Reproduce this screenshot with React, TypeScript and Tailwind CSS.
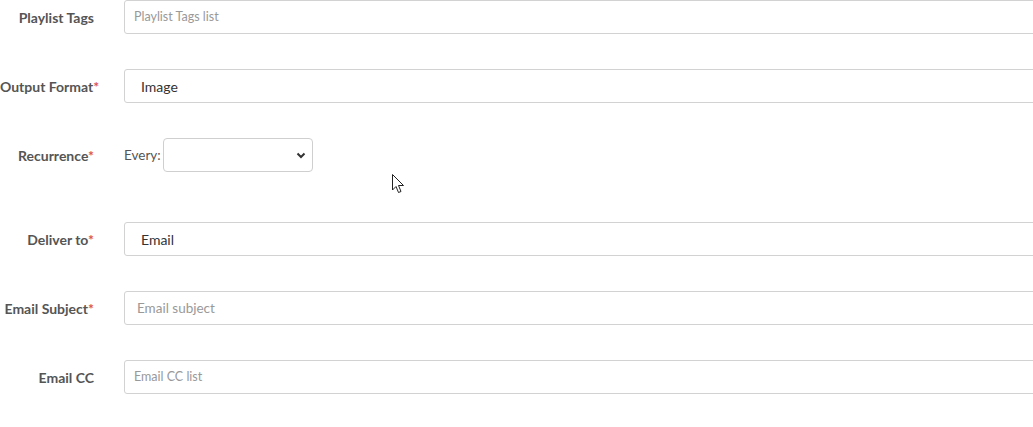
import React from 'react';

const FONT = "font-['Source_Sans_Pro','Lato','Noto_Sans',sans-serif]";

function Label({ text, required }: { text: string; required?: boolean }) {
  return (
    <div className="w-[94px] shrink-0 text-right text-[14px] font-bold text-[#555] whitespace-nowrap">
      {text}
      {required && <span className="text-[#d9534f]">*</span>}
    </div>
  );
}

function TextField({ value, placeholder, small }: { value?: string; placeholder?: string; small?: boolean }) {
  return (
    <div className="ml-[30px] -mr-4 flex h-[34px] flex-1 items-center rounded-[3px] border border-[#d2d2d2] bg-white">
      {value ? (
        <span className="pl-4 text-[14px] text-[#333]">{value}</span>
      ) : (
        <span className={small ? 'pl-[9px] text-[12.5px] text-[#999]' : 'pl-3 text-[13.5px] text-[#999]'}>{placeholder}</span>
      )}
    </div>
  );
}

export default function App() {
  return (
    <div className={`relative h-[427px] w-full overflow-hidden bg-white ${FONT}`}>
      <div className="flex flex-col gap-[35px]">
        <div className="flex h-[34px] items-center">
          <Label text="Playlist Tags" />
          <TextField placeholder="Playlist Tags list" small />
        </div>
        <div className="flex h-[34px] items-center">
          <Label text="Output Format" required />
          <TextField value="Image" />
        </div>
        <div className="mb-[15px] flex h-[34px] items-center">
          <Label text="Recurrence" required />
          <span className="ml-[30px] text-[13.5px] text-[#555]">Every:</span>
          <div className="ml-[2px] flex h-[34px] w-[150px] items-center justify-end rounded-[4px] border border-[#cfcfcf] bg-white pr-[6px]">
            <svg width="10" height="7" viewBox="0 0 10 7">
              <path d="M1.5 1.5 L5 5 L8.5 1.5" fill="none" stroke="#333" strokeWidth="2" />
            </svg>
          </div>
        </div>
        <div className="flex h-[34px] items-center">
          <Label text="Deliver to" required />
          <TextField value="Email" />
        </div>
        <div className="flex h-[34px] items-center">
          <Label text="Email Subject" required />
          <TextField placeholder="Email subject" />
        </div>
        <div className="flex h-[34px] items-center">
          <Label text="Email CC" />
          <TextField placeholder="Email CC list" small />
        </div>
      </div>
      <svg className="absolute left-[392px] top-[174px]" width="14" height="20" viewBox="0 0 14 20">
        <path d="M0.5 0.5 L0.5 16 L4 12.5 L6.5 18.5 L9 17.5 L6.5 11.5 L11.5 11.5 Z" fill="#fff" stroke="#222" strokeWidth="1" />
      </svg>
    </div>
  );
}
